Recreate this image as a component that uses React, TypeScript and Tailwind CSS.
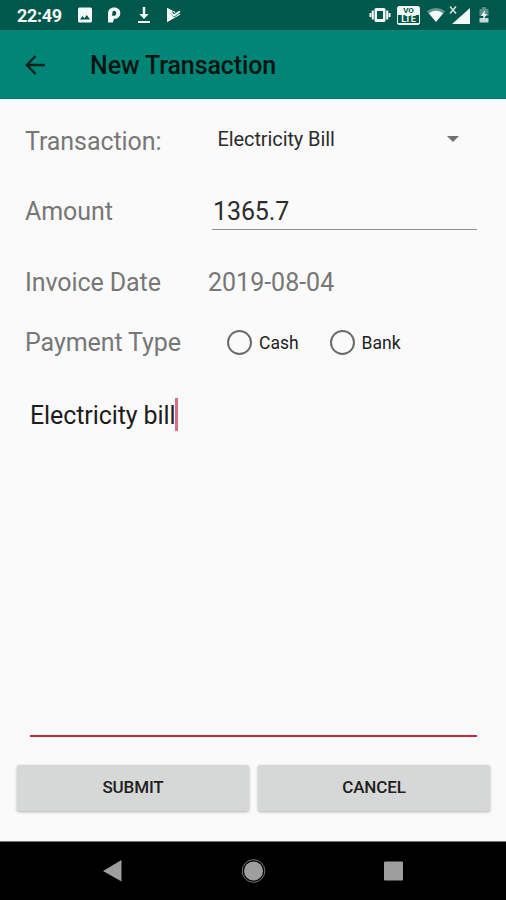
import type { ReactNode } from "react";

function Icon({ w, h, className = "", children }: { w: number; h: number; className?: string; children: ReactNode }) {
  return (
    <svg width={w} height={h} viewBox={`0 0 ${w} ${h}`} className={`shrink-0 ${className}`} fill="#f4f8f7">
      {children}
    </svg>
  );
}

function StatusBar() {
  return (
    <div className="flex h-[30px] items-center bg-[#00574b] pl-[17px] text-[#f4f8f7]">
      <span className="w-[60px] pt-[1px] text-[18px] leading-[30px] font-bold tracking-[-0.3px]">22:49</span>
      <Icon w={16} h={16}>
        <path fillRule="evenodd" d="M2.500 .5h11A1.500 1.500 0 0 1 15 2v12a1.500 1.500 0 0 1-1.500 1.500h-11A1.500 1.500 0 0 1 1 14V2A1.500 1.500 0 0 1 2.500 .5ZM3 12.500h10L9.800 8 7.300 11.200 5.500 9Z" />
      </Icon>
      <Icon w={14} h={16} className="ml-[14px]">
        <path fillRule="evenodd" d="M1 15.500V6.500C1 2.800 3.500.5 7.200.5 10.800.5 13.300 2.700 13.300 6.200c0 3.600-2.700 5.700-6.100 5.500L5.800 15.500ZM5.600 4.500 5 8.600C7.500 9.200 9.300 8.200 9.300 6.200 9.300 3.800 6.800 3.200 5.600 4.500Z" />
      </Icon>
      <Icon w={14} h={18} className="ml-[16px]">
        <path d="M5.800 1h2.400v7h3.600L7 13 2.200 8h3.600ZM1 15h12v2H1Z" />
      </Icon>
      <Icon w={16} h={16} className="ml-[15px]">
        <path d="M1 .8 14.500 7.500 1 15.200Z" />
        <path d="m5.500 5.300 2.800 3 6.500-5" stroke="#00574b" strokeWidth="3.400" fill="none" />
        <path d="m4 4.800 4 3.700L14 4.200" stroke="#f4f8f7" strokeWidth="2" fill="none" />
      </Icon>
      <Icon w={22} h={16} className="ml-[187px]">
        <path fillRule="evenodd" d="M7 1h8a1.500 1.500 0 0 1 1.500 1.500v11A1.500 1.500 0 0 1 15 15H7a1.500 1.500 0 0 1-1.500-1.500v-11A1.500 1.500 0 0 1 7 1Zm1 3v8h6V4ZM2.700 3.500h2.100v9H2.700ZM.5 6h1.800v4H.5ZM17.200 3.500h2.100v9h-2.100ZM19.700 6h1.800v4h-1.800Z" />
      </Icon>
      <div className="ml-[6px] flex h-[19px] w-[23px] shrink-0 flex-col rounded-[2px] border border-[#e5eeec] bg-[#f4f8f7] text-center text-[8px] font-bold">
        <span className="h-[8px] leading-[8px] text-[#00574b]">VO</span>
        <span className="h-[8px] bg-[#00574b] text-[9px] leading-[8px]">LTE</span>
      </div>
      <Icon w={20} h={16} className="ml-[6px]">
        <path d="M.8 4.200Q10-2.200 19.200 4.200L17.500 6.200Q10 1 2.500 6.200Z" opacity=".4" />
        <path d="M2.700 6.200Q10 .8 17.300 6.200L10 15Z" />
      </Icon>
      <Icon w={22} h={20} className="ml-[3px]">
        <path d="M21 3v16H3Z" />
        <path d="m1 1.500 6 7M7 1.500l-6 7" stroke="#d5e4e1" strokeWidth="1.500" />
      </Icon>
      <Icon w={12} h={18} className="ml-[7px]">
        <path d="M4 1h4v2h2.500v7h-9V3H4Z" opacity=".35" />
        <path d="M1.500 12h9v4.500h-9Z" opacity=".8" />
        <path d="M7 4 3 9.800h2.500L5 14l4-6H6.500Z" fill="#fff" />
      </Icon>
    </div>
  );
}

function Label({ children }: { children: ReactNode }) {
  return <span className="w-[183px] shrink-0 text-[25px] leading-[33px] tracking-[-0.08px] whitespace-nowrap text-[#777]">{children}</span>;
}

function Radio({ label, className = "" }: { label: string; className?: string }) {
  return (
    <label className={`flex items-center ${className}`}>
      <span className="mr-[7px] size-[25px] rounded-full border-[2.5px] border-[#6b6b6b]" />
      <span className="text-[17.5px] leading-[24px] text-[#222]">{label}</span>
    </label>
  );
}

function ActionButton({ children }: { children: ReactNode }) {
  return (
    <button className="h-[46px] flex-1 rounded-[2px] bg-[#d6d7d7] text-[17px] font-medium tracking-[-0.15px] text-[#202020] shadow-[0_1px_3px_rgba(0,0,0,0.3)]">
      {children}
    </button>
  );
}

export default function App() {
  return (
    <div className="flex h-[900px] w-[506px] flex-col overflow-hidden bg-[#fafafa] font-['Roboto',sans-serif]">
      <StatusBar />
      <header className="flex h-[69px] items-center border-b border-[#007466] bg-[#008577] pt-[2px] pl-[25px] text-[#001512]">
        <svg width="21" height="22" viewBox="0 0 21 22" fill="none" stroke="#00201c" strokeWidth="2.300">
          <path d="M10.500 2 1.800 11l8.700 9M2 11h18" />
        </svg>
        <h1 className="mt-[2px] ml-[44px] text-[25px] leading-[34px] font-medium tracking-[-0.1px]">New Transaction</h1>
      </header>
      <main className="flex flex-1 flex-col">
        <div className="flex h-[85px] items-center pl-[25px]">
          <Label>Transaction:</Label>
          <span className="ml-[9.5px] pb-[6px] text-[20px] leading-[26px] tracking-[-0.1px] text-[#2c2c2c]">Electricity Bill</span>
          <span className="mr-[47px] mb-[6px] ml-auto h-0 w-0 border-x-[6px] border-t-[6px] border-x-transparent border-t-[#707070]" />
        </div>
        <div className="flex h-[55px] items-center pl-[25px]">
          <Label>Amount</Label>
          <div className="mb-[2px] ml-[4px] h-[38px] w-[265px] border-b-[1.500px] border-[#909090] pt-[2px] pl-px text-[25px] leading-[35px] tracking-[-0.1px] text-[#2c2c2c]">1365.7</div>
        </div>
        <div className="flex h-[87px] items-center pl-[25px]">
          <Label>Invoice Date</Label>
          <span className="text-[25px] leading-[33px] text-[#777]">2019-08-04</span>
        </div>
        <div className="flex h-[33px] items-center pl-[25px]">
          <Label>Payment Type</Label>
          <Radio label="Cash" className="ml-[19px]" />
          <Radio label="Bank" className="ml-[31px]" />
        </div>
        <div className="mr-[29px] ml-[30px] mt-[39px] flex h-[339px] items-start border-b-[2px] border-[#c6283f] text-[25px] leading-[35px] tracking-[-0.1px] text-[#1c1c1c]">
          <span>Electricity bill</span>
          <span className="h-[33px] w-[3px] bg-[#df6a88]" />
        </div>
        <div className="mr-[16px] ml-[17px] mt-[28px] flex gap-[9px]">
          <ActionButton>SUBMIT</ActionButton>
          <ActionButton>CANCEL</ActionButton>
        </div>
      </main>
      <nav className="h-[59px] shrink-0 border-t border-[#777] bg-black">
        <svg width="506" height="58" viewBox="0 842 506 58" fill="#9e9e9e">
          <path d="M121.500 860v21.500L103 871Z" />
          <circle cx="253.500" cy="871" r="9.500" />
          <circle cx="253.500" cy="871" r="11.300" fill="none" stroke="#777" strokeWidth="1" />
          <rect x="384" y="861.500" width="19" height="19" rx="1" />
        </svg>
      </nav>
    </div>
  );
}
